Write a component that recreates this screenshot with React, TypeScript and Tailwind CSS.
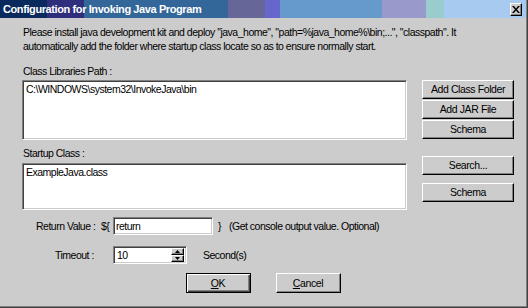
import React from "react";

const font =
  "font-[family-name:'Liberation_Sans',Arial,sans-serif]";

const raised =
  "bg-[#cccccc] border border-t-white border-l-white border-b-black border-r-black shadow-[inset_-1px_-1px_#808080]";

const sunken =
  "bg-white border border-t-[#808080] border-l-[#808080] border-b-white border-r-white shadow-[inset_1px_1px_#404040,inset_-1px_-1px_#cccccc]";

function Btn({ children, className = "" }: { children: React.ReactNode; className?: string }) {
  return (
    <div className={`${raised} flex items-center justify-center text-[10.5px] tracking-[-0.4px] leading-none text-black ${className}`}>
      {children}
    </div>
  );
}

export default function App() {
  return (
    <div className={`w-[528px] h-[308px] bg-[#cccccc] border-r border-b border-[#404040] overflow-hidden ${font} text-black`}>
      <div className="h-full border-r border-b border-[#808080] flex flex-col">
        {/* Title bar */}
        <div className="h-[18px] flex items-center shrink-0 bg-[linear-gradient(to_right,#0a2a5e_0px,#0a2a5e_47px,#2e2e7c_47px,#2e2e7c_84px,#336699_84px,#336699_228px,#666699_228px,#666699_265px,#6666cc_265px,#6666cc_280px,#6699cc_280px,#6699cc_382px,#9999cc_382px,#9999cc_426px,#99cccc_426px,#99cccc_444px,#a6caf0_444px,#a6caf0_100%)]">
          <span className="pl-[3px] text-white font-bold text-[11px] tracking-[-0.4px] leading-none whitespace-nowrap">
            Configuration for Invoking Java Program
          </span>
          <div className={`${raised} ml-auto mr-[4px] w-[12px] h-[13px] flex items-center justify-center`}>
            <svg width="8" height="7" viewBox="0 0 8 7">
              <path d="M0 0h2l2 2.5L6 0h2L5 3.5 8 7H6L4 4.5 2 7H0l3-3.5z" fill="black" />
            </svg>
          </div>
        </div>

        <div className="pl-[22px] flex flex-col text-[10.5px] tracking-[-0.5px]">
          {/* Intro */}
          <div className="mt-[7px] leading-[14px] whitespace-nowrap pl-[1px]">
            Please install java development kit and deploy "java_home", "path=%java_home%\bin;...", "classpath". It
            <br />
            automatically add the folder where startup class locate so as to ensure normally start.
          </div>

          {/* Section 1 */}
          <div className="mt-[11px] flex">
            <div className="w-[385px] flex flex-col">
              <div className="leading-[14px] pl-[1px]">Class Libraries Path :</div>
              <div className={`${sunken} mt-[2px] h-[60px] px-[3px] pt-[1px] leading-[14px]`}>
                C:\WINDOWS\system32\InvokeJava\bin
              </div>
            </div>
            <div className="ml-[15px] w-[92px] pt-[16px] flex flex-col gap-[1px]">
              <Btn className="h-[19px]">Add Class Folder</Btn>
              <Btn className="h-[19px]">Add JAR File</Btn>
              <Btn className="h-[19px]">Schema</Btn>
            </div>
          </div>

          {/* Section 2 */}
          <div className="mt-[6px] flex">
            <div className="w-[385px] flex flex-col">
              <div className="leading-[14px] pl-[1px]">Startup Class :</div>
              <div className={`${sunken} mt-[3px] h-[47px] px-[3px] pt-[1px] leading-[14px]`}>
                ExampleJava.class
              </div>
            </div>
            <div className="ml-[15px] w-[92px] pt-[10px] flex flex-col gap-[8px]">
              <Btn className="h-[19px]">Search...</Btn>
              <Btn className="h-[19px]">Schema</Btn>
            </div>
          </div>

          {/* Return value */}
          <div className="mt-[7px] h-[18px] flex items-center leading-none">
            <div className="w-[75px] pl-[14px] whitespace-nowrap">Return Value :</div>
            <div className="w-[16px] pl-[4px]">{"${"}</div>
            <div className={`${sunken} w-[100px] h-[18px] flex items-center px-[2px]`}>return</div>
            <div className="ml-[5px]">{"}"}</div>
            <div className="ml-[8px]">(Get console output value. Optional)</div>
          </div>

          {/* Timeout */}
          <div className="mt-[11px] h-[18px] flex items-center leading-none">
            <div className="w-[75px] pl-[33px] whitespace-nowrap">Timeout :</div>
            <div className="w-[16px]" />
            <div className={`${sunken} w-[74px] h-[18px] flex items-center pl-[3px] pr-[2px]`}>
              <span className="flex-1">10</span>
              <div className="w-[13px] h-[14px] flex flex-col">
                <div className={`${raised} h-[7px] flex items-center justify-center`}>
                  <svg width="5" height="3" viewBox="0 0 5 3">
                    <path d="M2.5 0L5 3H0z" fill="black" />
                  </svg>
                </div>
                <div className={`${raised} h-[7px] flex items-center justify-center`}>
                  <svg width="5" height="3" viewBox="0 0 5 3">
                    <path d="M0 0h5L2.5 3z" fill="black" />
                  </svg>
                </div>
              </div>
            </div>
            <div className="ml-[16px]">Second(s)</div>
          </div>
        </div>

        {/* OK / Cancel */}
        <div className="mt-[9px] flex justify-center gap-[25px] text-[10.5px] tracking-[-0.4px]">
          <div className="w-[65px] h-[20px] bg-[#cccccc] border border-black shadow-[inset_1px_1px_white,inset_-1px_-1px_#404040,inset_-2px_-2px_#808080] flex items-center justify-center leading-none">
            <span className="underline">O</span>K
          </div>
          <Btn className="w-[65px] h-[20px]">
            <span className="underline">C</span>ancel
          </Btn>
        </div>
      </div>
    </div>
  );
}
